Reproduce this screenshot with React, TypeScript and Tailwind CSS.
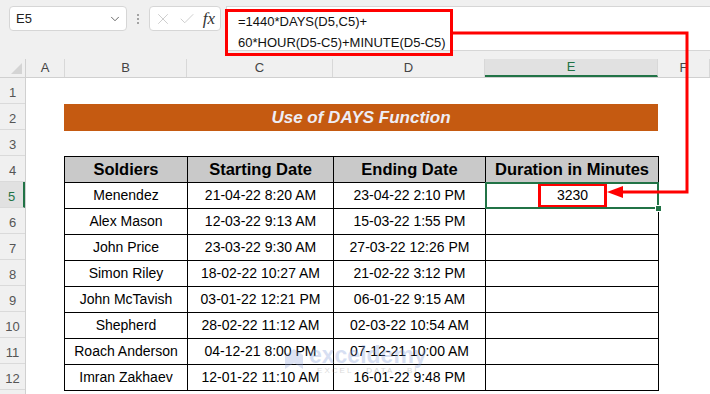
import { Check, ChevronDown, X } from "lucide-react";

const rows = [
  ["Menendez", "21-04-22 8:20 AM", "23-04-22 2:10 PM", "3230"],
  ["Alex Mason", "12-03-22 9:13 AM", "15-03-22 1:55 PM", ""],
  ["John Price", "23-03-22 9:30 AM", "27-03-22 12:26 PM", ""],
  ["Simon Riley", "18-02-22 10:27 AM", "21-02-22 3:12 PM", ""],
  ["John McTavish", "03-01-22 12:21 PM", "06-01-22 9:15 AM", ""],
  ["Shepherd", "28-02-22 11:12 AM", "02-03-22 10:54 AM", ""],
  ["Roach Anderson", "04-12-21 8:00 PM", "07-12-21 10:00 AM", ""],
  ["Imran Zakhaev", "12-01-22 11:10 AM", "16-01-22 9:48 PM", ""],
];

const columns = [
  { label: "A", w: "w-[39px]" },
  { label: "B", w: "w-[122px]" },
  { label: "C", w: "w-[146px]" },
  { label: "D", w: "w-[152px]" },
  { label: "E", w: "w-[173px]", active: true },
  { label: "F", w: "flex-1" },
];

export default function App() {
  return (
    <div className="relative w-[710px] h-[394px] overflow-hidden bg-white font-['Liberation_Sans',Arial,sans-serif] text-black">
      {/* Formula bar */}
      <div className="h-[59px] bg-[#f0f0f0] flex items-start pt-[6px] pl-[9px]">
        <div className="w-[118px] h-[25px] bg-white border border-[#d6d6d6] rounded-[4px] flex items-center justify-between pl-[6px] pr-[4px]">
          <span className="text-[13px] text-[#222]">E5</span>
          <ChevronDown size={14} strokeWidth={1.5} className="text-[#555]" />
        </div>
        <div className="w-[22px] h-[25px] flex flex-col items-center justify-center gap-[2px]">
          <span className="w-[2px] h-[2px] bg-[#8a8a8a] rounded-full" />
          <span className="w-[2px] h-[2px] bg-[#8a8a8a] rounded-full" />
          <span className="w-[2px] h-[2px] bg-[#8a8a8a] rounded-full" />
        </div>
        <div className="w-[72px] h-[25px] bg-white border border-[#d6d6d6] rounded-[4px] flex items-center pl-[4px] gap-[2px]">
          <X size={18} strokeWidth={1} className="text-[#bdbdbd]" />
          <Check size={18} strokeWidth={1} className="text-[#bdbdbd] ml-[4px]" />
          <span className="ml-auto mr-[5px] font-['Liberation_Serif',serif] italic text-[17px] text-[#333] leading-none">fx</span>
        </div>
        <div className="flex-1 h-[45px] ml-[5px] bg-white border-y border-l border-[#d6d6d6] pl-[11px] pt-[4px] text-[13px] leading-[21px] text-[#111]">
          <div>=1440*DAYS(D5,C5)+</div>
          <div>60*HOUR(D5-C5)+MINUTE(D5-C5)</div>
        </div>
      </div>

      {/* Column headers */}
      <div className="flex h-[19px] bg-[#f0f0f0] border-b border-[#d0d0d0]">
        <div className="w-[26px] h-full relative border-r border-[#d0d0d0]">
          <div className="absolute right-[3px] bottom-[3px] w-0 h-0 border-l-[11px] border-l-transparent border-b-[11px] border-b-[#d4d4d4]" />
        </div>
        {columns.map((c) => (
          <div
            key={c.label}
            className={`${c.w} h-full flex items-center justify-center text-[13px] border-r border-[#d8d8d8] ${
              c.active ? "bg-[#e1e1e1] text-[#217346] border-b-2 border-b-[#217346]" : "text-[#444]"
            }`}
          >
            {c.label}
          </div>
        ))}
      </div>

      {/* Sheet body */}
      <div className="flex">
        <div className="w-[26px] bg-[#f0f0f0] border-r border-[#d0d0d0]">
          {Array.from({ length: 13 }, (_, i) => i + 1).map((n) => (
            <div
              key={n}
              className={`h-[26px] flex items-center justify-center pt-[4px] text-[13px] border-b border-[#dadada] ${
                n === 5 ? "bg-[#e1e1e1] text-[#217346] border-r-2 border-r-[#217346]" : "text-[#555]"
              }`}
            >
              {n < 13 ? n : ""}
            </div>
          ))}
        </div>

        <div className="flex-1 pl-[38px] pt-[26px]">
          <div className="w-[594px] h-[27px] bg-[#c55a11] flex items-center justify-center text-[17px] font-bold italic text-[#eeedf5]">
            Use of DAYS Function
          </div>
          <div className="h-[25px]" />
          <table className="w-[594px] table-fixed border-collapse">
            <colgroup>
              <col className="w-[123px]" />
              <col className="w-[146px]" />
              <col className="w-[152px]" />
              <col className="w-[173px]" />
            </colgroup>
            <thead>
              <tr className="h-[26px] bg-[#c9c9c9]">
                {["Soldiers", "Starting Date", "Ending Date", "Duration in Minutes"].map((h) => (
                  <th key={h} className="border border-black text-[16.5px] font-bold text-center p-0 whitespace-nowrap">
                    {h}
                  </th>
                ))}
              </tr>
            </thead>
            <tbody>
              {rows.map((r, i) => (
                <tr key={r[0]} className="h-[26px]">
                  <td className="border border-black text-[14px] text-center p-0 whitespace-nowrap">{r[0]}</td>
                  <td className="border border-black text-[14px] text-center p-0 whitespace-nowrap">{r[1]}</td>
                  <td className="border border-black text-[14px] text-center p-0 whitespace-nowrap">{r[2]}</td>
                  <td className="border border-black text-[14px] text-center p-0 relative">
                    {i === 0 && (
                      <>
                        <div className="absolute left-[52px] top-[0px] w-[69px] h-[25px] border-[3px] border-[#ff0000] flex items-center justify-center">
                          {r[3]}
                        </div>
                        <div className="absolute -left-[1px] -top-[1px] -right-[1px] -bottom-[1px] border-2 border-[#217346]" />
                        <div className="absolute -right-[4px] -bottom-[4px] w-[7px] h-[7px] bg-[#217346] border border-white" />
                      </>
                    )}
                  </td>
                </tr>
              ))}
            </tbody>
          </table>
        </div>
      </div>

      {/* Red highlight on formula */}
      <div className="absolute left-[225px] top-[9px] w-[228px] h-[47px] border-[3px] border-[#ff0000]" />

      {/* Arrow */}
      <svg className="absolute inset-0 pointer-events-none" width="710" height="394">
        <polyline points="453,33 687,33 687,192 621,192" fill="none" stroke="#ff0000" strokeWidth="3" />
        <polygon points="607,192 623,186 623,198" fill="#ff0000" />
      </svg>

      {/* Watermark */}
      <div className="absolute left-[283px] top-[344px] flex items-center gap-[4px] opacity-30 pointer-events-none">
        <svg width="22" height="26" viewBox="0 0 22 26">
          <path d="M2 8 L11 2 L20 8 L20 22 L11 16 L2 22 Z" fill="#8ea3d8" />
        </svg>
        <div className="flex flex-col items-center">
          <span className="text-[23px] font-bold leading-[22px] text-[#7d97d6]">exceldemy</span>
          <span className="text-[8px] tracking-[2px] text-[#8a8a8a] leading-[10px]">EXCEL · DATA · BI</span>
        </div>
      </div>
    </div>
  );
}
